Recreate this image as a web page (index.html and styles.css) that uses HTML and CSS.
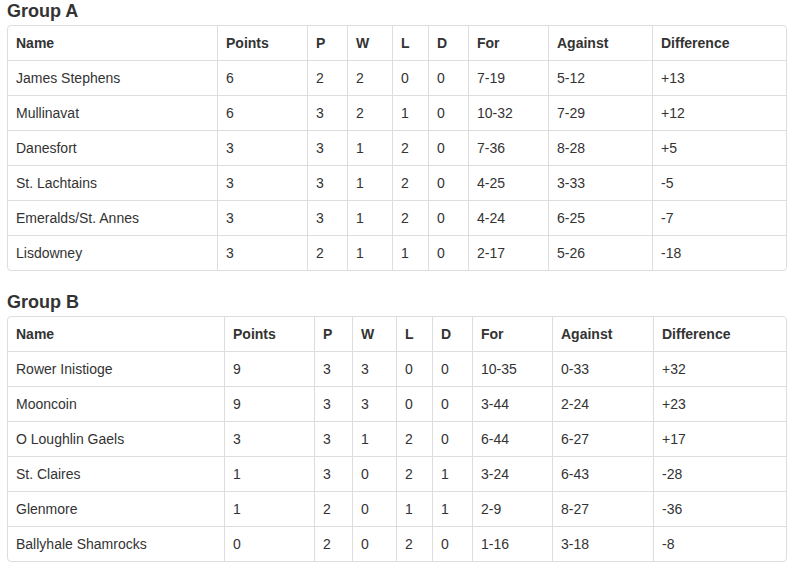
FILE: index.html
```html
<!DOCTYPE html>
<html lang="en">
<head>
<meta charset="utf-8">
<title>Groups</title>
<link rel="stylesheet" href="styles.css">
</head>
<body>
<div class="page">
  <h4 class="group-title">Group A</h4>
  <div class="table-wrap">
    <table class="standings group-a">
      <thead>
        <tr><th>Name</th><th>Points</th><th>P</th><th>W</th><th>L</th><th>D</th><th>For</th><th>Against</th><th>Difference</th></tr>
      </thead>
      <tbody>
        <tr><td>James Stephens</td><td>6</td><td>2</td><td>2</td><td>0</td><td>0</td><td>7-19</td><td>5-12</td><td>+13</td></tr>
        <tr><td>Mullinavat</td><td>6</td><td>3</td><td>2</td><td>1</td><td>0</td><td>10-32</td><td>7-29</td><td>+12</td></tr>
        <tr><td>Danesfort</td><td>3</td><td>3</td><td>1</td><td>2</td><td>0</td><td>7-36</td><td>8-28</td><td>+5</td></tr>
        <tr><td>St. Lachtains</td><td>3</td><td>3</td><td>1</td><td>2</td><td>0</td><td>4-25</td><td>3-33</td><td>-5</td></tr>
        <tr><td>Emeralds/St. Annes</td><td>3</td><td>3</td><td>1</td><td>2</td><td>0</td><td>4-24</td><td>6-25</td><td>-7</td></tr>
        <tr><td>Lisdowney</td><td>3</td><td>2</td><td>1</td><td>1</td><td>0</td><td>2-17</td><td>5-26</td><td>-18</td></tr>
      </tbody>
    </table>
  </div>

  <h4 class="group-title">Group B</h4>
  <div class="table-wrap">
    <table class="standings group-b">
      <thead>
        <tr><th>Name</th><th>Points</th><th>P</th><th>W</th><th>L</th><th>D</th><th>For</th><th>Against</th><th>Difference</th></tr>
      </thead>
      <tbody>
        <tr><td>Rower Inistioge</td><td>9</td><td>3</td><td>3</td><td>0</td><td>0</td><td>10-35</td><td>0-33</td><td>+32</td></tr>
        <tr><td>Mooncoin</td><td>9</td><td>3</td><td>3</td><td>0</td><td>0</td><td>3-44</td><td>2-24</td><td>+23</td></tr>
        <tr><td>O Loughlin Gaels</td><td>3</td><td>3</td><td>1</td><td>2</td><td>0</td><td>6-44</td><td>6-27</td><td>+17</td></tr>
        <tr><td>St. Claires</td><td>1</td><td>3</td><td>0</td><td>2</td><td>1</td><td>3-24</td><td>6-43</td><td>-28</td></tr>
        <tr><td>Glenmore</td><td>1</td><td>2</td><td>0</td><td>1</td><td>1</td><td>2-9</td><td>8-27</td><td>-36</td></tr>
        <tr><td>Ballyhale Shamrocks</td><td>0</td><td>2</td><td>0</td><td>2</td><td>0</td><td>1-16</td><td>3-18</td><td>-8</td></tr>
      </tbody>
    </table>
  </div>
</div>
</body>
</html>
```

FILE: styles.css
```css
html, body {
  margin: 0;
  padding: 0;
  background: #ffffff;
}

body {
  font-family: "Liberation Sans", Arial, Helvetica, sans-serif;
  font-size: 14px;
  color: #333333;
}

.page {
  padding: 1px 0 0 7px;
  width: 780px;
}

.group-title {
  margin: 0 0 4px 0;
  font-size: 18px;
  line-height: 20px;
  font-weight: bold;
  color: #333333;
}

.table-wrap {
  border: 1px solid #dddddd;
  border-radius: 4px;
  overflow: hidden;
  margin-bottom: 21px;
}

.standings {
  width: 778px;
  table-layout: fixed;
  border-collapse: separate;
  border-spacing: 0;
}

.standings th,
.standings td {
  box-sizing: border-box;
  padding: 8px 8px;
  line-height: 18px;
  text-align: left;
  vertical-align: top;
  white-space: nowrap;
  border-left: 1px solid #dddddd;
  border-top: 1px solid #dddddd;
}

.standings th {
  font-weight: bold;
  border-top: 0;
}

.standings th:first-child,
.standings td:first-child {
  border-left: 0;
}

.group-a th:nth-child(1) { width: 209px; }
.group-a th:nth-child(2) { width: 90px; }
.group-a th:nth-child(3) { width: 40px; }
.group-a th:nth-child(4) { width: 45px; }
.group-a th:nth-child(5) { width: 36px; }
.group-a th:nth-child(6) { width: 40px; }
.group-a th:nth-child(7) { width: 80px; }
.group-a th:nth-child(8) { width: 104px; }
.group-a th:nth-child(9) { width: 134px; }

.group-b th:nth-child(1) { width: 216px; }
.group-b th:nth-child(2) { width: 90px; }
.group-b th:nth-child(3) { width: 38px; }
.group-b th:nth-child(4) { width: 44px; }
.group-b th:nth-child(5) { width: 36px; }
.group-b th:nth-child(6) { width: 40px; }
.group-b th:nth-child(7) { width: 80px; }
.group-b th:nth-child(8) { width: 101px; }
.group-b th:nth-child(9) { width: 133px; }
```
